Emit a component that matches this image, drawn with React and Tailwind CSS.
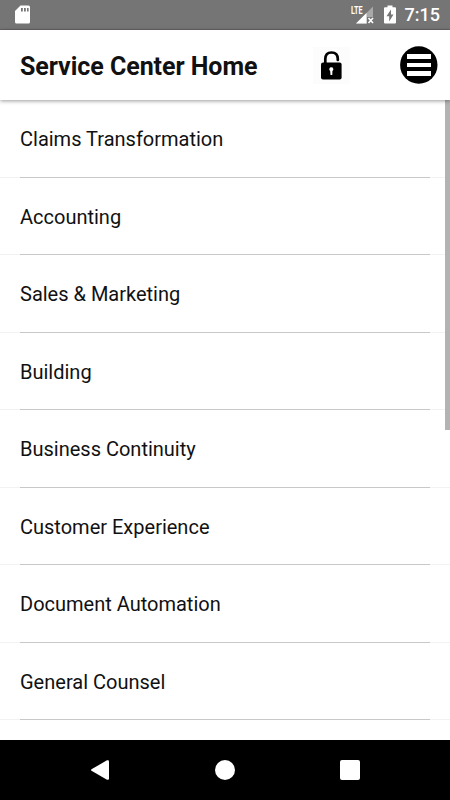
const items = [
  "Claims Transformation",
  "Accounting",
  "Sales & Marketing",
  "Building",
  "Business Continuity",
  "Customer Experience",
  "Document Automation",
  "General Counsel",
];

const StatusBar = () => (
  <div className="h-[30px] shrink-0 bg-[#757575] border-b border-[#686466] flex items-center justify-between pl-[15px] pr-[10px]">
    <svg width="15" height="19" viewBox="0 0 15 19">
      <path d="M5.5 0.5H13.5Q15 0.5 15 2V17Q15 18.5 13.5 18.5H1.5Q0 18.5 0 17V6Z" fill="#fff" />
      <path d="M6 3h1.8v3.5H6zM9 3h1.8v3.5H9zM12 3h1.6v3.5H12z" fill="#757575" />
    </svg>
    <div className="flex items-center">
      <div className="relative w-[24px] h-[20px]">
        <svg className="absolute left-0 top-0" width="24" height="20" viewBox="0 0 24 20">
          <path d="M22 1.5V12H16V18.5H5Z" fill="#a9a9a9" />
          <path d="M15.5 8V18.5H5Z" fill="#fff" />
          <path d="M17.5 13L22 18M22 13L17.5 18" stroke="#fff" strokeWidth="1.6" />
        </svg>
        <span className="absolute left-0 top-0 text-[11px] leading-[11px] font-bold text-white origin-left scale-x-[0.66]">LTE</span>
      </div>
      <svg className="ml-[9px]" width="12" height="19" viewBox="0 0 12 19">
        <path d="M3.5 0.5H8.5V2.3H11Q12 2.3 12 3.3V17.5Q12 18.5 11 18.5H1Q0 18.5 0 17.5V3.3Q0 2.3 1 2.3H3.5Z" fill="#fff" />
        <path d="M7 4.5L2.5 11.2H5.2V16.5L9.5 9.5H7Z" fill="#757575" />
      </svg>
      <span className="ml-[9px] pt-[1px] text-[18px] leading-[20px] font-medium text-white">7:15</span>
    </div>
  </div>
);

const Header = () => (
  <header className="relative z-10 h-[70px] shrink-0 bg-white flex items-center pl-5 pr-[12px] shadow-[0_1px_4px_rgba(0,0,0,0.4)]">
    <h1 className="flex-1 text-[25px] leading-[30px] font-bold tracking-[-0.05px] text-[#111] pt-[3px]">Service Center Home</h1>
    <button className="w-[37px] h-[37px] mr-[50px] bg-[#fcfcfc]" aria-label="Unlock">
      <svg width="37" height="37" viewBox="0 0 37 37">
        <path d="M12.3 17V12.3Q12.3 5.5 18.5 5.5Q24.8 5.5 24.8 12.1V13" fill="none" stroke="#000" strokeWidth="2.7" strokeLinecap="round" />
        <rect x="8" y="15.4" width="20.6" height="17" rx="2" fill="#000" />
        <path d="M18.3 20.2a2 2 0 0 1 1.1 3.7L19.3 28H17.5L17.2 23.9A2 2 0 0 1 18.3 20.2Z" fill="#fff" />
      </svg>
    </button>
    <button className="w-[38px] h-[38px]" aria-label="Menu">
      <svg width="38" height="38" viewBox="0 0 38 38">
        <circle cx="18.8" cy="19" r="18.7" fill="#000" />
        <path d="M7 8h24v5H7zM7 17h24v4H7zM7 25h24v5H7z" fill="#fff" />
      </svg>
    </button>
  </header>
);

const NavBar = () => (
  <nav className="h-[60px] shrink-0 bg-black grid grid-cols-[200px_50px_200px] items-center">
    <svg className="justify-self-center" width="20" height="20" viewBox="0 0 20 20">
      <path d="M1.5 9.2L17 0.3Q19 -0.3 19 1.5V18.5Q19 20.3 17 19.7L1.5 10.8Q0.5 10 1.5 9.2Z" fill="#fff" />
    </svg>
    <div className="justify-self-center w-5 h-5 rounded-full bg-white" />
    <div className="justify-self-center w-5 h-5 rounded-[2px] bg-white" />
  </nav>
);

const App = () => {
  return (
    <div className="w-[450px] h-[800px] flex flex-col overflow-hidden bg-white font-[Roboto,sans-serif]">
      <StatusBar />
      <Header />
      <main className="flex-1 min-h-0 relative overflow-hidden">
        <ul>
          {items.map((item) => (
            <li key={item} className="h-[77.5px] flex bg-[linear-gradient(#f2f2f2,#f2f2f2)] bg-[length:100%_1px] bg-bottom bg-no-repeat">
              <div className="mx-5 flex-1 flex items-center border-b border-[#c8c8c8] pt-[2px] text-[20px] text-[#111]">
                {item}
              </div>
            </li>
          ))}
        </ul>
        {/* scroll indicator */}
        <div className="absolute right-0 top-0 w-[5px] h-[330px] bg-[#b3b3b3]" />
      </main>
      <NavBar />
    </div>
  );
};

export default App;
